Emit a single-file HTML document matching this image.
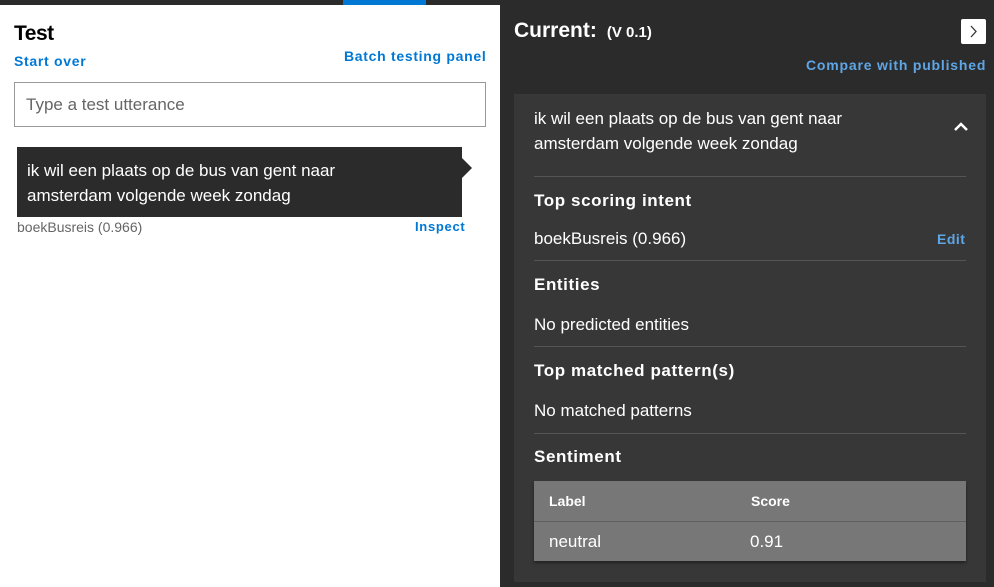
<!DOCTYPE html>
<html><head><style>
body{margin:0;width:994px;height:587px;overflow:hidden;background:#fff;font-family:"Liberation Sans",sans-serif;position:relative}
.a{position:absolute;white-space:nowrap}
.blue{color:#0078d4;font-weight:bold;font-size:14px;letter-spacing:0.7px}
.w{color:#fff}
.h{font-weight:bold;font-size:17px;color:#fff;letter-spacing:0.6px}
.t{font-size:17px;color:#fff}
.line{position:absolute;left:534px;width:432px;height:1px;background:#555}
</style></head><body>
<div class="a" style="left:0;top:0;width:994px;height:5px;background:#2b2b2b"></div>
<div class="a" style="left:343px;top:0;width:83px;height:5px;background:#0078d4"></div>
<div class="a" style="left:14px;top:22px;font-size:21px;color:#000;font-weight:bold;letter-spacing:-0.5px">Test</div>
<div class="a blue" style="left:14px;top:53px">Start over</div>
<div class="a blue" style="left:344px;top:48px">Batch testing panel</div>
<div class="a" style="left:14px;top:82px;width:470px;height:43px;border:1px solid #999"></div>
<div class="a" style="left:26px;top:95px;font-size:17px;color:#666">Type a test utterance</div>
<div class="a" style="left:17px;top:147px;width:445px;height:70px;background:#2b2b2b"></div>
<div class="a" style="left:462px;top:158px;width:0;height:0;border-top:10px solid transparent;border-bottom:10px solid transparent;border-left:10px solid #2b2b2b"></div>
<div class="a w" style="left:27px;top:158px;font-size:17px;line-height:25px">ik wil een plaats op de bus van gent naar<br>amsterdam volgende week zondag</div>
<div class="a" style="left:17px;top:219px;font-size:14px;color:#666">boekBusreis (0.966)</div>
<div class="a blue" style="left:415px;top:219px;font-size:13px">Inspect</div>

<div class="a" style="left:500px;top:5px;width:494px;height:582px;background:#2b2b2b"></div>
<div class="a" style="left:514px;top:19px;font-size:21px;font-weight:bold;color:#fff">Current: <span style="font-size:15px">&nbsp;(V 0.1)</span></div>
<div class="a" style="left:961px;top:19px;width:25px;height:25px;background:#fff;border-radius:2px"></div>
<svg class="a" style="left:961px;top:19px" width="25" height="25"><path d="M10 7L15 12.5L10 18" stroke="#333" stroke-width="1.3" fill="none"/></svg>
<div class="a" style="left:806px;top:57px;font-size:14px;font-weight:bold;color:#5ea6e6;letter-spacing:0.8px">Compare with published</div>
<div class="a" style="left:514px;top:94px;width:472px;height:488px;background:#373737"></div>
<div class="a t" style="left:534px;top:106px;line-height:25px">ik wil een plaats op de bus van gent naar<br>amsterdam volgende week zondag</div>
<svg class="a" style="left:953px;top:121px" width="16" height="12"><path d="M2 9L8 3L14 9" stroke="#fff" stroke-width="2.5" fill="none"/></svg>
<div class="line" style="top:176px"></div>
<div class="a h" style="left:534px;top:191px">Top scoring intent</div>
<div class="a t" style="left:534px;top:229px">boekBusreis (0.966)</div>
<div class="a" style="left:937px;top:231px;font-size:14px;font-weight:bold;color:#5ea6e6;letter-spacing:0.5px">Edit</div>
<div class="line" style="top:260px"></div>
<div class="a h" style="left:534px;top:275px">Entities</div>
<div class="a t" style="left:534px;top:315px">No predicted entities</div>
<div class="line" style="top:346px"></div>
<div class="a h" style="left:534px;top:361px">Top matched pattern(s)</div>
<div class="a t" style="left:534px;top:401px">No matched patterns</div>
<div class="line" style="top:433px"></div>
<div class="a h" style="left:534px;top:447px">Sentiment</div>
<div class="a" style="left:534px;top:481px;width:432px;height:80px;background:#777;box-shadow:0 2px 3px rgba(0,0,0,.4)"></div>
<div class="a" style="left:534px;top:521px;width:432px;height:1px;background:#5f5f5f"></div>
<div class="a" style="left:549px;top:493px;font-size:14px;font-weight:bold;color:#fff">Label</div>
<div class="a" style="left:751px;top:493px;font-size:14px;font-weight:bold;color:#fff">Score</div>
<div class="a" style="left:549px;top:532px;font-size:17px;color:#fff">neutral</div>
<div class="a" style="left:750px;top:532px;font-size:17px;color:#fff">0.91</div>
</body></html>
